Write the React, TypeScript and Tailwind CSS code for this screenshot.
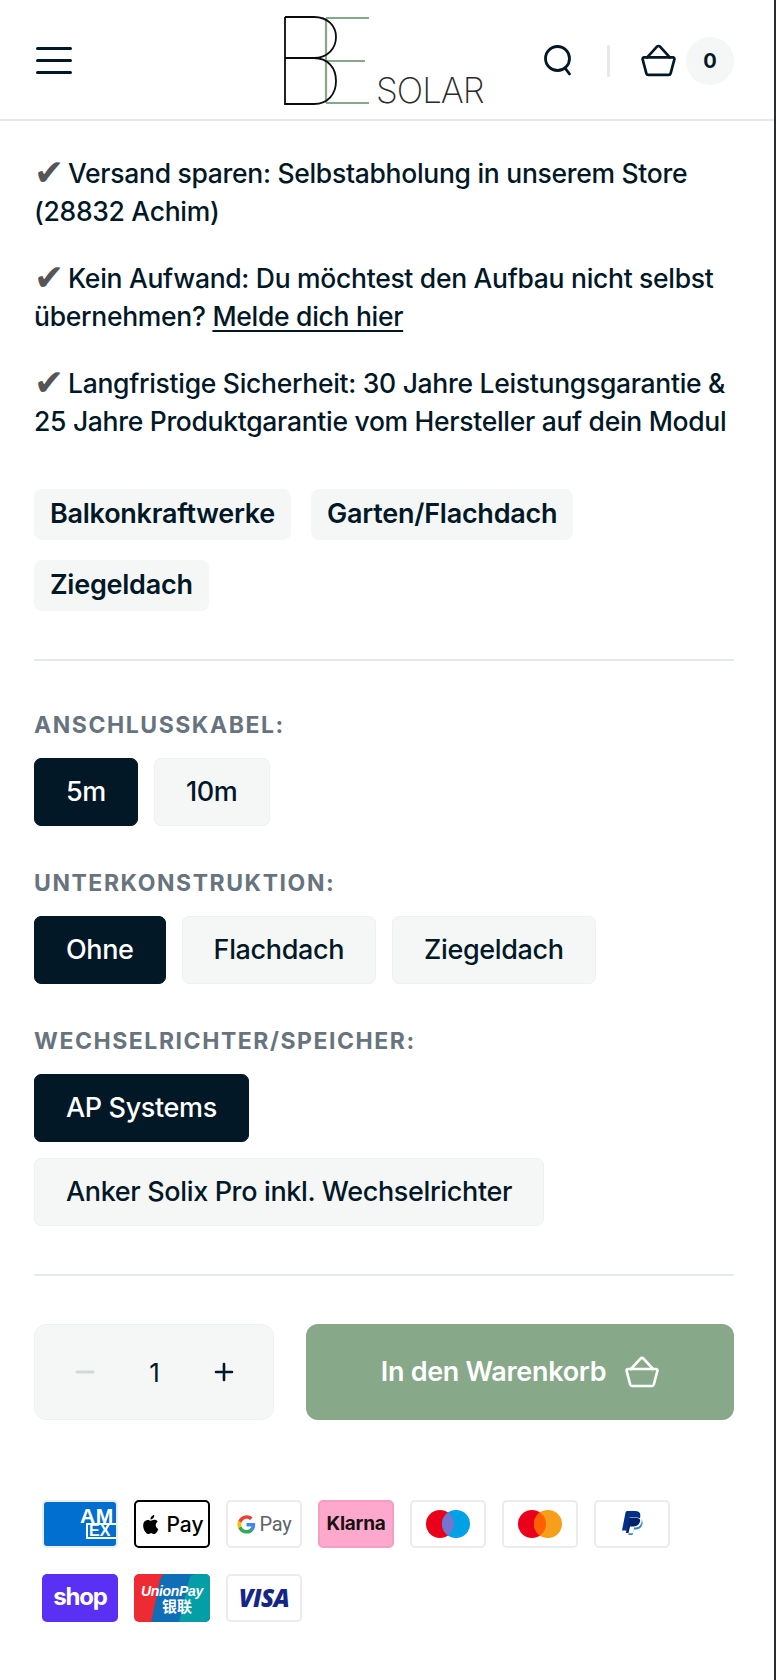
import React from "react";

const Basket = ({ className }: { className: string }) => (
  <svg viewBox="0 0 34 32" fill="none" stroke="currentColor" strokeWidth="2.600" strokeLinejoin="round" strokeLinecap="round" className={className}>
    <path d="M3 13h28a1.500 1.500 0 0 1 1.400 1.900L28.800 28.500a2 2 0 0 1-2 1.500H7.200a2 2 0 0 1-2-1.500L1.600 14.900A1.500 1.500 0 0 1 3 13Z" />
    <path d="M6 13l9.500-10.400a2 2 0 0 1 3 0L28 13" />
  </svg>
);

const Check = () => <span className="inline-block w-[34px] text-[#555] text-[36px] leading-[0] align-[-2px]">✔</span>;

const Swatch = ({ label, active }: { label: string; active?: boolean }) => (
  <div
    className={`h-[68px] px-[31px] flex items-center rounded-[7px] border text-[27px] tracking-[-0.36px] font-medium ${
      active ? "bg-[#021826] border-[#021826] text-white" : "bg-[#f5f7f7] border-[#eff1f1] text-[#021826]"
    }`}
  >
    {label}
  </div>
);

const Tag = ({ label }: { label: string }) => (
  <div className="h-[51px] px-4 flex items-center rounded-[8px] bg-[#f5f7f7] text-[27px] tracking-[-0.25px] font-semibold">{label}</div>
);

const Option = ({ title, children }: { title: string; children: React.ReactNode }) => (
  <div className="mb-[40px] last:mb-0">
    <div className="text-[23px] leading-[34px] font-bold tracking-[1.55px] text-[#67747e] mb-[16px]">{title}</div>
    <div className="flex flex-wrap gap-x-4 gap-y-4">{children}</div>
  </div>
);

const Card = ({ children, className }: { children: React.ReactNode; className: string }) => (
  <div className={`w-[76px] h-[48px] rounded-[5px] flex items-center justify-center overflow-hidden ${className}`}>{children}</div>
);

const Overlap = ({ left, right, mid }: { left: string; right: string; mid: string }) => (
  <svg viewBox="0 0 44 28" className="w-[44px] h-[28px]">
    <circle cx="14" cy="14" r="14" fill={left} />
    <circle cx="30" cy="14" r="14" fill={right} />
    <path d="M22 2.500a14 14 0 0 1 0 23a14 14 0 0 1 0-23Z" fill={mid} />
  </svg>
);

export default function App() {
  return (
    <div className="w-[776px] h-[1680px] bg-white border-r-2 border-[#2b2d2e] font-['Inter',sans-serif] text-[#021826] overflow-hidden">
      <header className="h-[121px] border-b-2 border-[#e6e9e9] pl-[36px] pt-[2px] flex items-center">
        <svg viewBox="0 0 36 27" fill="none" stroke="#021826" strokeWidth="3" strokeLinecap="round" className="w-[36px] h-[27px] shrink-0">
          <path d="M1.500 1.500h33M1.500 13.500h33M1.500 25.500h33" />
        </svg>
        <div className="ml-[212px] relative w-[200px] h-[90px] shrink-0">
          <svg viewBox="0 0 200 90" fill="none" className="w-[200px] h-[90px]">
            <path d="M42 2v85M42 2h43M42 45h39M42 87h43" stroke="#86a789" strokeWidth="2.200" />
            <path d="M1 1h29c14 0 22 9 22 20s-8 21-22 21H1M30 42c14 0 22 10 22 23s-8 23-22 23H1V1" stroke="#0b0b0b" strokeWidth="1.800" />
          </svg>
          <span className="absolute left-[92px] top-[53px] text-[35px] leading-[42px] font-extralight tracking-[-1px] text-[#2a2a2a]">SOLAR</span>
        </div>
        <svg viewBox="0 0 31 31" fill="none" stroke="#021826" strokeWidth="2.800" strokeLinecap="round" className="ml-[59px] w-[31px] h-[31px] shrink-0">
          <circle cx="14.500" cy="13.500" r="12" />
          <path d="M22 23l4.500 6" />
        </svg>
        <div className="ml-[33px] w-[3px] h-[32px] bg-[#e6e9e9] rounded-full shrink-0" />
        <Basket className="ml-[31px] w-[35px] h-[33px] shrink-0" />
        <div className="ml-[10px] w-[48px] h-[48px] rounded-full bg-[#f5f7f7] flex items-center justify-center text-[20px] font-bold shrink-0">0</div>
      </header>

      <main className="pl-[34px] pr-[40px]">
        <div className="pt-[34px] text-[26.5px] tracking-[-0.3px] leading-[37.5px] font-medium">
          <p className="mb-[30px]">
            <Check />Versand sparen: Selbstabholung in unserem Store (28832 Achim)
          </p>
          <p className="mb-[30px]">
            <Check />Kein Aufwand: Du möchtest den Aufbau nicht selbst übernehmen?{" "}
            <a className="underline underline-offset-[4px]">Melde dich hier</a>
          </p>
          <p>
            <Check />Langfristige Sicherheit: 30 Jahre Leistungsgarantie &amp; 25 Jahre Produktgarantie vom Hersteller auf dein Modul
          </p>
        </div>

        <div className="mt-[49px] flex flex-wrap gap-x-[20px] gap-y-[20px]">
          <Tag label="Balkonkraftwerke" />
          <Tag label="Garten/Flachdach" />
          <Tag label="Ziegeldach" />
        </div>

        <div className="mt-[48px] border-t-2 border-[#e6e9e9]" />

        <div className="mt-[47px]">
          <Option title="ANSCHLUSSKABEL:">
            <Swatch label="5m" active />
            <Swatch label="10m" />
          </Option>
          <Option title="UNTERKONSTRUKTION:">
            <Swatch label="Ohne" active />
            <Swatch label="Flachdach" />
            <Swatch label="Ziegeldach" />
          </Option>
          <Option title="WECHSELRICHTER/SPEICHER:">
            <Swatch label="AP Systems" active />
            <Swatch label="Anker Solix Pro inkl. Wechselrichter" />
          </Option>
        </div>

        <div className="mt-[48px] border-t-2 border-[#e6e9e9]" />

        <div className="mt-[48px] flex gap-[32px]">
          <div className="w-[240px] h-[96px] rounded-[12px] bg-[#f5f7f7] border border-[#eff1f1] flex items-center justify-between pl-[40px] pr-[39px]">
            <svg viewBox="0 0 20 20" className="w-[20px] h-[20px]" stroke="#d4d8da" strokeWidth="3" strokeLinecap="round"><path d="M2 10h16" /></svg>
            <span className="text-[26px]">1</span>
            <svg viewBox="0 0 20 20" className="w-[20px] h-[20px]" stroke="#021826" strokeWidth="2.600" strokeLinecap="round"><path d="M2 10h16M10 2v16" /></svg>
          </div>
          <div className="w-[428px] h-[96px] rounded-[12px] bg-[#87a889] text-white flex items-center justify-center gap-[19px] text-[27px] font-semibold tracking-[-0.3px]">
            In den Warenkorb
            <Basket className="w-[34px] h-[32px]" />
          </div>
        </div>

        <div className="mt-[80px] pl-[8px] grid grid-cols-[repeat(7,76px)] gap-x-[16px] gap-y-[26px]">
          <Card className="bg-[#016fd0] border-2 border-[#ececec] relative">
            <div className="absolute left-[36px] top-[5px] text-white font-['Liberation_Sans',sans-serif] font-bold text-[21px] leading-[17px] tracking-[0.5px] whitespace-nowrap">AM</div>
            <div className="absolute left-[42px] top-[21px] w-[34px] h-[16px] border-2 border-r-0 border-white text-white font-['Liberation_Sans',sans-serif] font-bold text-[16px] leading-[12px] pl-[1px] whitespace-nowrap">EX</div>
          </Card>
          <Card className="bg-white border-2 border-black gap-[3px]">
            <svg viewBox="0 0 24 24" className="w-[23px] h-[23px]" fill="#000">
              <path d="M16.400 12.600c0-2.400 2-3.600 2.100-3.600-1.100-1.700-2.900-1.900-3.500-1.900-1.500-.2-2.900.9-3.700.9-.8 0-1.900-.9-3.200-.8-1.600 0-3.200 1-4 2.400-1.700 3-.4 7.400 1.200 9.800.8 1.200 1.800 2.500 3.100 2.500 1.200 0 1.700-.8 3.200-.8s1.900.8 3.200.8c1.300 0 2.200-1.200 3-2.400.9-1.400 1.300-2.700 1.400-2.800-.1 0-2.800-1.100-2.800-4.100ZM13.900 5.300c.7-.8 1.100-2 1-3.100-1 0-2.200.7-2.900 1.500-.6.7-1.200 1.900-1 3 1.100.1 2.200-.6 2.900-1.400Z" />
            </svg>
            <span className="text-[21px] font-medium leading-none text-black">Pay</span>
          </Card>
          <Card className="bg-white border-2 border-[#ececec] gap-[4px]">
            <svg viewBox="0 0 24 24" className="w-[19px] h-[19px]">
              <path fill="#4285F4" d="M23 12.300c0-.8-.1-1.600-.2-2.300H12v4.400h6.200c-.3 1.400-1.100 2.600-2.300 3.400v2.800h3.700c2.200-2 3.400-5 3.400-8.300Z" />
              <path fill="#34A853" d="M12 23.500c3.100 0 5.700-1 7.600-2.800l-3.700-2.900c-1 .7-2.300 1.100-3.900 1.100-3 0-5.500-2-6.400-4.800H1.800v3A11.500 11.500 0 0 0 12 23.500Z" />
              <path fill="#FBBC05" d="M5.600 14.100a6.900 6.900 0 0 1 0-4.300v-3H1.800a11.500 11.500 0 0 0 0 10.300l3.800-3Z" />
              <path fill="#EA4335" d="M12 4.800c1.700 0 3.200.6 4.400 1.700l3.300-3.300A11.500 11.500 0 0 0 1.800 6.800l3.800 3c.9-2.800 3.400-5 6.400-5Z" />
            </svg>
            <span className="font-['Roboto',sans-serif] text-[20px] tracking-[-0.3px] leading-none text-[#5f6368]">Pay</span>
          </Card>
          <Card className="bg-[#ffa8cd] border-2 border-[#f49ec2]">
            <span className="text-[19px] font-bold tracking-[-0.3px] text-[#17120f]">Klarna</span>
          </Card>
          <Card className="bg-white border-2 border-[#ececec]">
            <Overlap left="#eb001b" right="#00a2e5" mid="#7375cf" />
          </Card>
          <Card className="bg-white border-2 border-[#ececec]">
            <Overlap left="#eb001b" right="#f79e1b" mid="#ff5f00" />
          </Card>
          <Card className="bg-white border-2 border-[#ececec]">
            <svg viewBox="0 0 24 28" className="w-[24px] h-[28px]">
              <path fill="#3086c8" d="M20 7c1.500 1 2 2.800 1.600 5-.8 3.800-3.200 5.500-6.600 5.500h-1l-1 5c0 .4-.4.700-.8.700H8.500l-.2 1.300c0 .3.200.5.500.5h3.200c.4 0 .7-.3.800-.7l.9-4.800h1.500c3.700 0 6.500-1.700 7.300-5.700.4-2-.2-4-2.500-6.800Z" />
              <path fill="#012169" d="M8 8h8c2 0 4 .6 4.200 2.500-.6 4-3 6-6.800 6H10L8.500 23H6L8 8Z" />
              <path fill="#003087" d="M7.500 1h7.500c3.800 0 6 1.800 5.200 5.800l-.2 1.700c-1-.8-2.400-1-4-1H9.600L7.700 20.500H2L5.500 2.500C5.600 1.600 6.500 1 7.500 1Z" />
            </svg>
          </Card>
          <Card className="bg-[#5a31f4]">
            <span className="text-[24px] font-bold tracking-[-1.2px] text-white leading-none pb-[3px]">shop</span>
          </Card>
          <Card className="relative">
            <svg viewBox="0 0 76 48" className="absolute inset-0 w-[76px] h-[48px]">
              <rect width="76" height="48" fill="#ee2a32" />
              <path d="M32 0H76V48H18Q17 48 18 44L26 6Q27 0 32 0Z" fill="#0f6eb5" />
              <path d="M62 0H76V48H45L55 6Q56 0 62 0Z" fill="#049ea6" />
            </svg>
            <div className="relative flex flex-col items-center leading-none text-white italic font-bold font-['Liberation_Sans',sans-serif]">
              <span className="text-[14px] tracking-[-0.3px]">UnionPay</span>
              <span className="text-[15px] not-italic font-['Noto_Sans_CJK_SC',sans-serif] ml-[10px]">银联</span>
            </div>
          </Card>
          <Card className="bg-white border-2 border-[#ececec]">
            <span className="font-['Open_Sans',sans-serif] text-[24px] font-extrabold italic tracking-[-0.5px] text-[#142787]">VISA</span>
          </Card>
        </div>
      </main>
    </div>
  );
}
